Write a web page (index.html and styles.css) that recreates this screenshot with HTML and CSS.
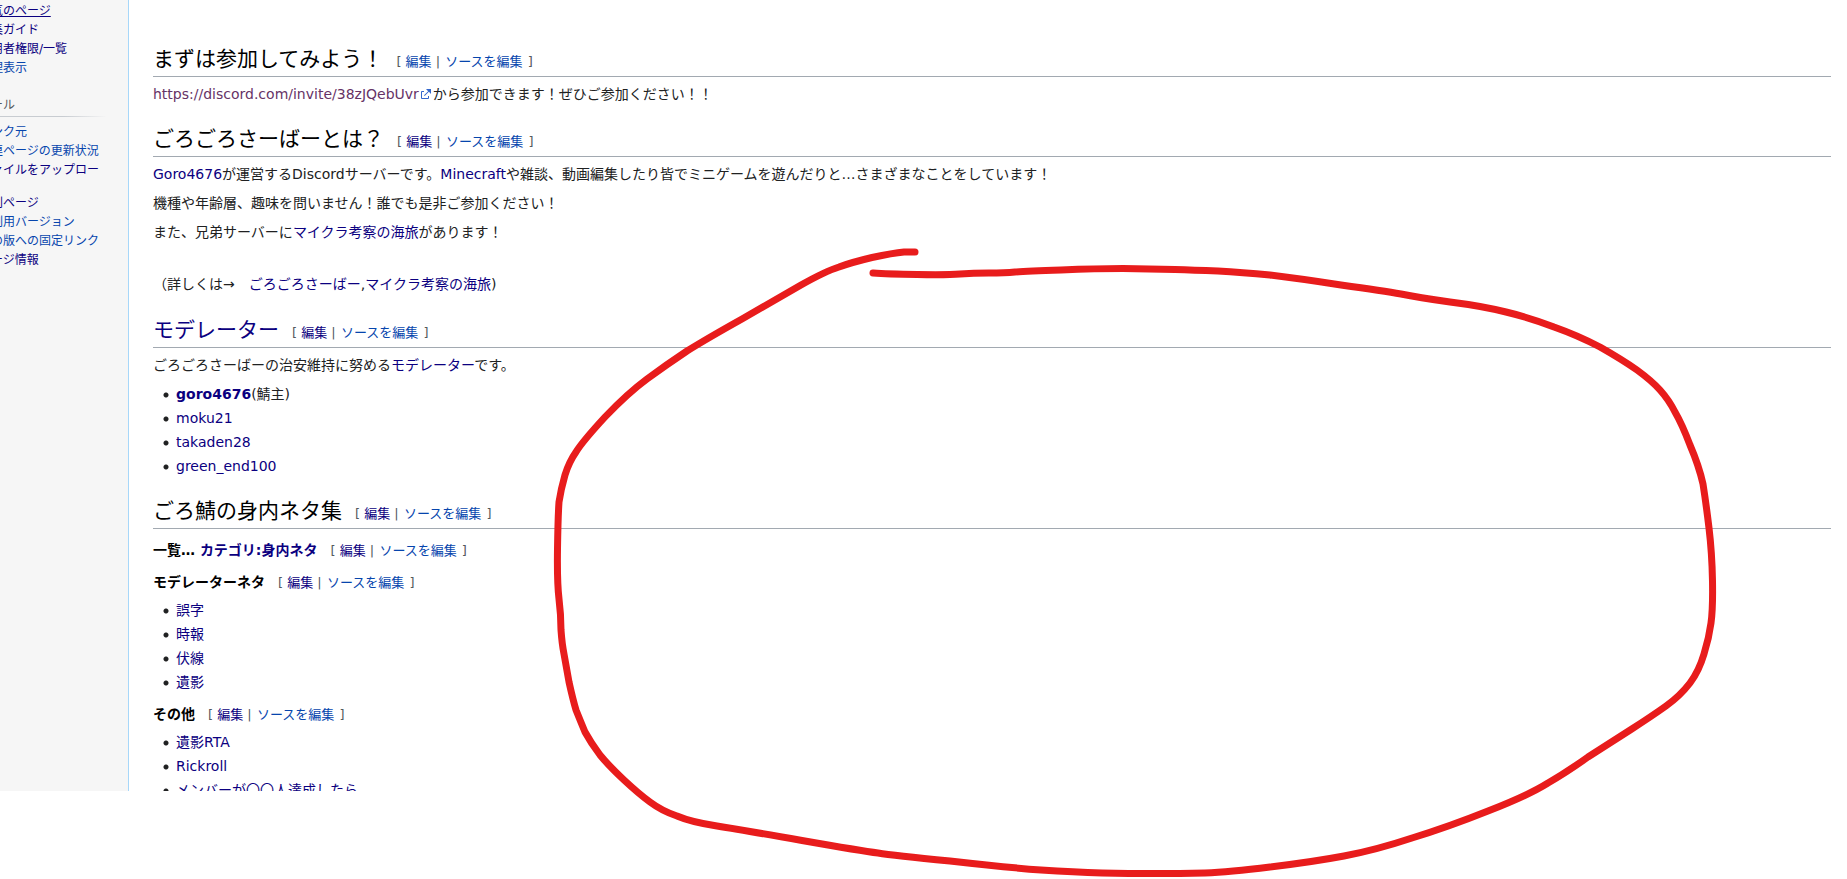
FILE: index.html
```html
<!DOCTYPE html>
<html lang="ja">
<head>
    <meta charset="UTF-8">
    <meta name="viewport" content="width=device-width, initial-scale=1.0">
    <title>ごろごろさーばー</title>
    <link rel="stylesheet" href="styles.css">
</head>
<body>
    <div class="page">
        <nav class="sidebar">
            <ul class="menu">
                <li><a class="visited underlined" href="#">人気のページ</a></li>
                <li><a class="visited" href="#">編集ガイド</a></li>
                <li><a class="visited" href="#">利用者権限/一覧</a></li>
                <li><a href="#">管理表示</a></li>
            </ul>
            <h3 class="menu-title">ツール</h3>
            <ul class="menu">
                <li><a href="#">リンク元</a></li>
                <li><a href="#">関連ページの更新状況</a></li>
                <li><a class="visited" href="#">ファイルをアップロード</a></li>
                <li><a class="visited" href="#">特別ページ</a></li>
                <li><a href="#">印刷用バージョン</a></li>
                <li><a href="#">この版への固定リンク</a></li>
                <li><a class="visited" href="#">ページ情報</a></li>
            </ul>
        </nav>

        <main class="content">
            <h2>まずは参加してみよう！<span class="edit-section">[ <a href="#">編集</a> | <a href="#">ソースを編集</a> ]</span></h2>
            <p><a class="external" href="#">https://discord.com/invite/38zJQebUvr<svg class="external-icon" viewBox="0 0 12 12" aria-hidden="true"><path d="M6 1h5v5L8.860 3.850 4.700 8 4 7.300l4.150-4.160zM2 3h2v1H2v6h6V8h1v2a1 1 0 0 1-1 1H2a1 1 0 0 1-1-1V4a1 1 0 0 1 1-1" /></svg></a>から参加できます！ぜひご参加ください！！</p>

            <h2>ごろごろさーばーとは？<span class="edit-section">[ <a class="visited" href="#">編集</a> | <a href="#">ソースを編集</a> ]</span></h2>
            <p><a class="visited" href="#">Goro4676</a>が運営するDiscordサーバーです。<a class="visited" href="#">Minecraft</a>や雑談、動画編集したり皆でミニゲームを遊んだりと…さまざまなことをしています！</p>
            <p>機種や年齢層、趣味を問いません！誰でも是非ご参加ください！</p>
            <p>また、兄弟サーバーに<a class="visited" href="#">マイクラ考察の海旅</a>があります！</p>
            <p class="detail">（詳しくは→　<a class="visited" href="#">ごろごろさーばー</a>,<a class="visited" href="#">マイクラ考察の海旅</a>)</p>

            <h2><a class="visited" href="#">モデレーター</a><span class="edit-section">[ <a class="visited" href="#">編集</a> | <a href="#">ソースを編集</a> ]</span></h2>
            <p>ごろごろさーばーの治安維持に努める<a class="visited" href="#">モデレーター</a>です。</p>
            <ul>
                <li><b><a class="visited" href="#">goro4676</a></b>(鯖主)</li>
                <li><a class="visited" href="#">moku21</a></li>
                <li><a class="visited" href="#">takaden28</a></li>
                <li><a class="visited" href="#">green_end100</a></li>
            </ul>

            <h2>ごろ鯖の身内ネタ集<span class="edit-section">[ <a class="visited" href="#">編集</a> | <a href="#">ソースを編集</a> ]</span></h2>
            <h3>一覧… <a class="visited" href="#">カテゴリ:身内ネタ</a><span class="edit-section">[ <a class="visited" href="#">編集</a> | <a href="#">ソースを編集</a> ]</span></h3>
            <h3>モデレーターネタ<span class="edit-section">[ <a class="visited" href="#">編集</a> | <a href="#">ソースを編集</a> ]</span></h3>
            <ul>
                <li><a class="visited" href="#">誤字</a></li>
                <li><a class="visited" href="#">時報</a></li>
                <li><a class="visited" href="#">伏線</a></li>
                <li><a class="visited" href="#">遺影</a></li>
            </ul>
            <h3>その他<span class="edit-section">[ <a class="visited" href="#">編集</a> | <a href="#">ソースを編集</a> ]</span></h3>
            <ul>
                <li><a class="visited" href="#">遺影RTA</a></li>
                <li><a class="visited" href="#">Rickroll</a></li>
                <li><a class="visited" href="#">メンバーが〇〇人達成したら</a></li>
            </ul>
        </main>
    </div>

    <!-- 手書きの赤丸 -->
    <svg class="marker" viewBox="0 0 1847 879" aria-hidden="true">
        <path d="M873 273Q887 274 917 274.500Q948 275 960 274Q973 273 989 273Q1005 273 1015 272Q1026 271 1061 270Q1096 268.500 1123 268.500Q1150 269 1175 269.500Q1193 270 1218 271Q1242 272.500 1270 275Q1299 278.500 1341 285Q1384 291 1401 294Q1418 297.500 1450 302Q1482 306 1506 312Q1531 318 1554 327Q1578 335.500 1600 347Q1622 359.500 1637 370Q1652 381 1660 390Q1669 400 1675 412Q1682 424 1690 445Q1699 466 1703 484Q1706 503 1709 528Q1712 553 1712.500 581Q1713 609 1711 623Q1709 638 1704 654Q1699 671 1690 683Q1680 696 1666 706Q1652 716 1631 729.500Q1610 743 1588 757Q1567 772 1548 783Q1529 795 1488 811Q1448 827 1412 838Q1376 850 1344 856Q1312 862 1270 867Q1229 872 1205 873Q1180 873.500 1154 873.500Q1129 873.500 1102 873Q1074 872 1041 870Q1007 867.500 950 861Q893 855.500 878 853Q862 851 802 840.500Q742 830 717 826Q691 822 677 816Q662 811 650 802Q639 794 624 780Q609 766 600 755Q591 743 585 732Q580 720 576 710Q573 700 569 682Q566 665 564 654Q562 644 561 630Q561 615 559 599Q557 582 557.500 549Q558 516 559 502Q561 489 565 475Q569 462 576 452Q582 442 605 417Q628 393 647 379Q666 365 687 351Q708 338 742 319L801 285Q826 271 839 267Q851 262.500 872 257.500Q893 253 904 252L915 252" />
    </svg>
</body>
</html>
```
FILE: styles.css
```css
* {
    box-sizing: border-box;
}

body {
    margin: 0;
    background: #fff;
    color: #202122;
    font-family: "DejaVu Sans", "Noto Sans CJK JP", sans-serif;
    font-size: 14px;
    line-height: 22px;
    overflow: hidden;
}

a {
    color: #0645ad;
    text-decoration: none;
}

a:hover,
a.underlined {
    text-decoration: underline;
}

a.visited {
    color: #0b0080;
}

a.external {
    color: #636;
}

.page {
    display: flex;
    height: 90vh;
    overflow: hidden;
}

/* サイドバー */
.sidebar {
    flex: 0 0 129px;
    padding-top: 4px;
    background: #f6f6f6;
    border-right: 1px solid #a7d7f9;
    font-size: 12px;
    line-height: 14px;
}

.menu {
    list-style: none;
    margin: 0 0 0 -21px;
    padding: 0;
    width: 126px;
}

.menu li {
    margin: 0 0 5px;
}

.menu-title {
    margin: 23px 22px 8px -21px;
    padding-bottom: 4px;
    border-bottom: 1px solid;
    border-image: linear-gradient(to right, #c8ccd1 33%, #c8ccd1 66%, transparent) 1;
    color: #54595d;
    font-size: 12px;
    font-weight: normal;
}

/* 本文 */
.content {
    flex: 1;
    min-width: 0;
    padding: 24px 16px 0 24px;
}

.content h2,
.content h3 {
    color: #000;
}

.content h2 {
    margin: 22px 0 6px;
    padding: 1px 0 5px;
    border-bottom: 1px solid #a2a9b1;
    font-size: 21px;
    font-weight: normal;
    line-height: 23px;
}

.content h2:first-child {
    margin-top: 23px;
}

.content h3 {
    margin: 10px 0 6px;
    font-size: 14px;
    font-weight: bold;
}

.content p {
    margin: 0 0 7px;
}

.content .detail {
    margin: 30px 0 23px;
}

.content ul {
    margin: 6px 0 0 7px;
    padding: 0;
    list-style: none;
}

.content li {
    margin-bottom: 2px;
    padding-left: 16px;
    background: radial-gradient(circle at 6px 12px, #202122 2px, transparent 3px);
}

.edit-section {
    margin-left: 13px;
    color: #54595d;
    font-size: 13px;
    font-weight: normal;
    line-height: 14px;
}

.edit-section a + a {
    margin: 0 1px;
}

.external-icon {
    width: 12px;
    height: 12px;
    margin: 0 1px;
    fill: #36c;
    vertical-align: -1px;
}

.marker {
    position: absolute;
    top: 0;
    left: 0;
    width: 100%;
    fill: none;
    stroke: #e81c1c;
    stroke-width: 7;
    stroke-linecap: round;
    stroke-linejoin: round;
    pointer-events: none;
}
```
